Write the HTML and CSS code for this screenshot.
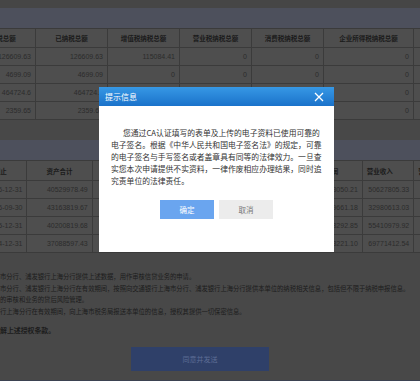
FILE: index.html
```html
<!DOCTYPE html>
<html lang="zh-CN">
<head>
    <meta charset="UTF-8">
    <title>纳税信息授权</title>
    <link rel="stylesheet" href="styles.css">
</head>
<body>

<div class="page">
    <div class="topbar"></div>

    <div class="section">
        <div class="section-title"></div>
        <table class="grid grid-tax">
            <colgroup>
                <col><col><col><col><col><col class="wide"><col class="last">
            </colgroup>
            <tr>
                <th>应纳税总额</th>
                <th>已纳税总额</th>
                <th>增值税纳税总额</th>
                <th>营业税纳税总额</th>
                <th>消费税纳税总额</th>
                <th>企业所得税纳税总额</th>
                <th>其他税种纳税总额</th>
            </tr>
            <tr>
                <td>126609.63</td><td>126609.63</td><td>115084.41</td><td>0</td><td>0</td><td>0</td><td>0</td>
            </tr>
            <tr>
                <td>4699.09</td><td>4699.09</td><td>0</td><td>0</td><td>0</td><td>0</td><td>0</td>
            </tr>
            <tr>
                <td>464724.6</td><td>464724.6</td><td>0</td><td>0</td><td>0</td><td>0</td><td>0</td>
            </tr>
            <tr>
                <td>2359.65</td><td>2359.65</td><td>0</td><td>0</td><td>0</td><td>0</td><td>0</td>
            </tr>
        </table>
    </div>

    <div class="section">
        <div class="section-title"></div>
        <table class="grid grid-finance">
            <colgroup>
                <col class="date"><col class="money"><col><col><col><col><col class="income"><col class="last">
            </colgroup>
            <tr>
                <th>所属期止</th>
                <th>资产合计</th>
                <th>负债合计</th>
                <th>所有者权益</th>
                <th>利润总额</th>
                <th>净利润</th>
                <th class="left">营业收入</th>
                <th class="left">营业成本</th>
            </tr>
            <tr>
                <td>2016-12-31</td><td>40529978.49</td><td>21638402.15</td><td>18891576.34</td><td>2150733.62</td><td>1613050.21</td><td>50627805.33</td><td class="left">28825096.17</td>
            </tr>
            <tr>
                <td>2016-09-30</td><td>43163819.67</td><td>24715290.08</td><td>18448529.59</td><td>1706214.90</td><td>1279661.18</td><td>32980613.03</td><td class="left">31007742.85</td>
            </tr>
            <tr>
                <td>2015-12-31</td><td>40200819.68</td><td>22480155.37</td><td>17720664.31</td><td>2584390.47</td><td>1938292.85</td><td>55410979.92</td><td class="left">51288503.26</td>
            </tr>
            <tr>
                <td>2014-12-31</td><td>37088597.43</td><td>20963741.52</td><td>16124855.91</td><td>3017628.14</td><td>2263221.10</td><td>69771412.54</td><td class="left">64621380.09</td>
            </tr>
        </table>
    </div>

    <div class="terms">
        <p>市分行、浦发银行上海分行提供上述数据，用作审核信贷业务的申请。</p>
        <p>市分行、浦发银行上海分行在有效期间，按照向交通银行上海市分行、浦发银行上海分行提供本单位的纳税相关信息，包括但不限于纳税申报信息。</p>
        <p>的审核和业务的贷后风险管理。</p>
        <p>行上海分行在有效期间，向上海市税务局报送本单位的信息，授权其提供一切保密信息。</p>
        <p class="agree">解上述授权条款。</p>
    </div>

    <div class="actions">
        <button class="btn-send">同意并发送</button>
    </div>

    <div class="footer"></div>
</div>

<div class="dialog">
    <div class="dialog-head">
        <span class="dialog-title">提示信息</span>
        <svg class="dialog-close" width="10" height="10" viewBox="0 0 10 10">
            <path d="M1 1 L9 9 M9 1 L1 9" stroke="#fff" stroke-width="1.3" fill="none"/>
        </svg>
    </div>
    <div class="dialog-body">
        <p class="dialog-text">
            <span class="first">您通过CA认证填写的表单及上传的电子资料已使用可靠的</span><br>
            电子签名。根据《中华人民共和国电子签名法》的规定，可靠<br>
            的电子签名与手写签名或者盖章具有同等的法律效力。一旦查<br>
            实您本次申请提供不实资料，一律作废相应办理结果，同时追<br>
            究责单位的法律责任。
        </p>
        <div class="dialog-buttons">
            <button class="btn btn-ok">确定</button>
            <button class="btn btn-cancel">取消</button>
        </div>
    </div>
</div>

</body>
</html>
```

FILE: styles.css
```css
html, body {
    margin: 0;
    padding: 0;
}

body {
    background: #484848;
    font-family: "Noto Sans CJK SC", sans-serif;
    overflow: hidden;
    width: 420px;
    height: 381px;
    position: relative;
}

p {
    margin: 0;
}

.topbar {
    height: 8px;
    background: #464646;
}

.section + .section {
    margin-top: 20px;
}

.section-title {
    height: 20px;
    background: #4d505c;
}

/* tables */

.grid {
    border-collapse: collapse;
    table-layout: fixed;
    background: #4e4e4e;
    font-family: "Liberation Sans", "Noto Sans CJK SC", sans-serif;
    font-size: 7px;
    color: #2c2c2c;
}

.grid th,
.grid td {
    border: 1px solid #3b3b3b;
    padding: 0 4px;
    white-space: nowrap;
    overflow: hidden;
}

.grid th {
    height: 18px;
    font-family: "Noto Sans CJK SC", sans-serif;
    font-size: 6.5px;
    font-weight: bold;
    color: #1b1b1b;
    text-align: center;
}

.grid td {
    height: 17px;
    text-align: right;
}

.grid .left {
    text-align: left;
}

.grid-tax {
    width: 530px;
    margin-left: -37px;
}

.grid-tax col {
    width: 72px;
}

.grid-tax col.wide {
    width: 90px;
}

.grid-tax col.last {
    width: 80px;
}

.grid-finance {
    width: 540px;
    margin-left: -40px;
}

.grid-finance th {
    height: 19px;
}

.grid-finance col {
    width: 63px;
}

.grid-finance col.date {
    width: 62px;
}

.grid-finance col.money {
    width: 61px;
}

.grid-finance col.income {
    width: 48px;
}

.grid-finance col.last {
    width: 80px;
}

.grid-finance td.left {
    padding-left: 15px;
}

/* terms */

.terms {
    margin-top: 18px;
    font-size: 6.3px;
    line-height: 11.7px;
    color: #1c1c1c;
    white-space: nowrap;
}

.terms .agree {
    margin-top: 7px;
    font-size: 6.9px;
    font-weight: bold;
}

.actions {
    margin-top: 6px;
    padding-left: 131px;
}

.btn-send {
    width: 138px;
    height: 24px;
    border: 0;
    background: #2f4069;
    color: #5d6d95;
    font-family: "Noto Sans CJK SC", sans-serif;
    font-size: 7px;
    padding: 0;
}

.footer {
    margin-top: 9px;
    height: 6px;
    background: #3b4251;
}

/* dialog */

.dialog {
    position: absolute;
    left: 99px;
    top: 87px;
    width: 235px;
    height: 165px;
    background: #fff;
}

.dialog-head {
    height: 19px;
    background: linear-gradient(#3798e5, #1a72ca);
    display: flex;
    align-items: center;
    justify-content: space-between;
    padding: 0 10px 0 6px;
}

.dialog-title {
    color: #fff;
    font-size: 8px;
}

.dialog-close {
    display: block;
}

.dialog-body {
    padding: 21px 12px 0 12px;
}

.dialog-text {
    font-size: 7.8px;
    line-height: 12px;
    color: #333;
    white-space: nowrap;
}

.dialog-text .first {
    padding-left: 12px;
}

.dialog-buttons {
    margin-top: 13px;
    display: flex;
    justify-content: center;
    gap: 5px;
}

.btn {
    width: 54px;
    height: 19px;
    border: 0;
    padding: 0;
    font-family: "Noto Sans CJK SC", sans-serif;
    font-size: 7.5px;
}

.btn-ok {
    background: #6aa5ef;
    color: #fff;
}

.btn-cancel {
    background: #ececec;
    color: #777;
}
```
